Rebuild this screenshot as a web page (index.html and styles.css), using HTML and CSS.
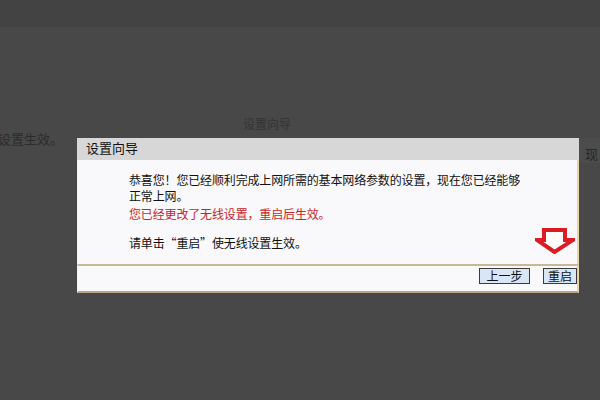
FILE: index.html
```html
<!DOCTYPE html>
<html lang="zh-CN">
<head>
<meta charset="utf-8">
<link rel="stylesheet" href="styles.css">
</head>
<body>
<div class="page">
  <div class="topband"></div>
  <div class="bg-main">
    <div class="bg-left"><span class="bg-text">设置生效。</span></div>
    <div class="bg-right">
      <div class="bg-title">设置向导</div>
      <div class="bg-row"><span class="bg-text bg-cut">现</span></div>
    </div>
  </div>

  <div class="dialog">
    <div class="dlg-head">设置向导</div>
    <div class="dlg-body">
      <p class="msg">恭喜您！您已经顺利完成上网所需的基本网络参数的设置，现在您已经能够<br>正常上网。</p>
      <p class="msg red">您已经更改了无线设置，重启后生效。</p>
      <p class="msg hint">请单击“重启”使无线设置生效。</p>
    </div>
    <div class="dlg-foot">
      <button class="btn btn-prev">上一步</button>
      <button class="btn btn-reboot">重启</button>
    </div>
    <svg class="arrow" width="40" height="26" viewBox="0 0 40 26">
      <polygon points="9,2 30,2 30,12 38,12 19.5,24 2,12 9,12" fill="#ffffff" stroke="#dc1c24" stroke-width="4" stroke-linejoin="miter"/>
    </svg>
  </div>
</div>
</body>
</html>
```
FILE: styles.css
```css
html, body {
  margin: 0;
  padding: 0;
}
body {
  width: 600px;
  height: 400px;
  overflow: hidden;
  background: #484848;
  font-family: "Noto Sans CJK SC", "Noto Sans", sans-serif;
}
.page {
  position: relative;
  width: 600px;
  height: 400px;
}
.topband {
  height: 27px;
  background: #434343;
}
.bg-main {
  display: flex;
}
.bg-left {
  width: 235px;
  padding-top: 98px;
}
.bg-text {
  font-size: 13px;
  line-height: 18px;
  color: #2c2c2c;
}
.bg-left .bg-text {
  margin-left: -2px;
}
.bg-right {
  flex: 1;
  padding-top: 87px;
}
.bg-title {
  font-size: 12px;
  line-height: 20px;
  color: #333333;
  padding-left: 8px;
  height: 24px;
}
.bg-row {
  height: 25px;
  background: #4c4c4c;
  display: flex;
  justify-content: flex-end;
  align-items: center;
  padding-top: 6px;
  box-sizing: border-box;
}
.bg-cut {
  width: 15px;
  overflow: hidden;
  white-space: nowrap;
  display: inline-block;
  color: #262626;
}
.dialog {
  position: absolute;
  left: 77px;
  top: 138px;
  width: 502px;
  height: 155px;
  display: flex;
  flex-direction: column;
}
.dlg-head {
  height: 22px;
  background: #d7d7d7;
  font-size: 13px;
  line-height: 20px;
  color: #111111;
  padding-left: 9px;
}
.dlg-body {
  height: 104px;
  background: #f9f9fb;
  border-left: 1px solid #fbf3e2;
  border-right: 2px solid #ead2aa;
  padding-left: 51px;
  padding-top: 12px;
  box-sizing: border-box;
}
.msg {
  margin: 0;
  font-size: 12px;
  line-height: 16px;
  color: #111111;
  letter-spacing: -0.15px;
}
.red {
  color: #c4262c;
  line-height: 16px;
  margin-top: 2px;
}
.hint {
  line-height: 16px;
  margin-top: 13px;
}
.dlg-foot {
  height: 29px;
  background: #f9f9fb;
  border-top: 2px solid #c9b898;
  border-bottom: 2px solid #b7a586;
  border-left: 1px solid #fbf3e2;
  border-right: 2px solid #ead2aa;
  box-sizing: border-box;
  display: flex;
  justify-content: flex-end;
  align-items: flex-start;
  padding-top: 2px;
  padding-right: 0;
  gap: 13px;
}
.btn {
  margin: 0;
  height: 16px;
  padding: 0;
  border: 1px solid #3a3a3a;
  background: #d9e6f6;
  font-family: "Noto Sans CJK SC", "Noto Sans", sans-serif;
  font-size: 12px;
  line-height: 14px;
  color: #111111;
}
.btn-prev {
  width: 51px;
}
.btn-reboot {
  width: 34px;
}
.arrow {
  position: absolute;
  left: 458px;
  top: 90px;
}
```
